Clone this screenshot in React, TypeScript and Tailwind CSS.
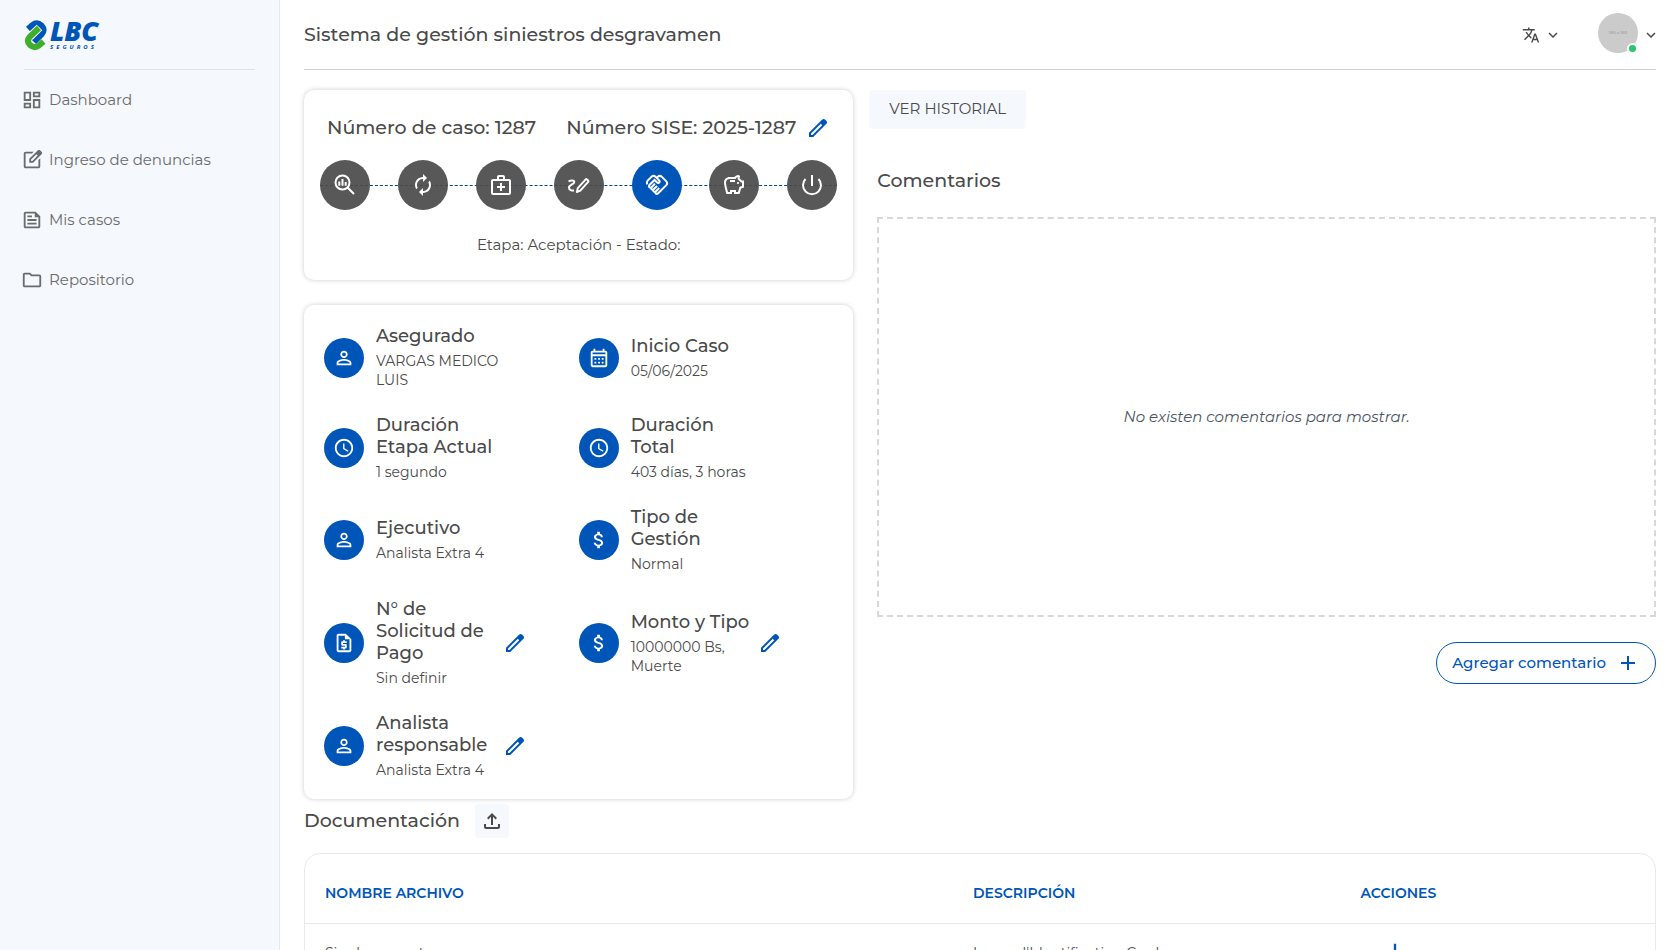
import type { ReactNode } from "react";
import {
  MdAccessTime,
  MdAdd,
  MdAttachMoney,
  MdAutorenew,
  MdKeyboardArrowDown,
  MdOutlineCalendarMonth,
  MdOutlineDashboard,
  MdOutlineFeed,
  MdOutlineFileDownload,
  MdOutlineFileUpload,
  MdOutlineFolder,
  MdOutlineHandshake,
  MdOutlineMedicalServices,
  MdOutlineRequestQuote,
  MdOutlineSavings,
  MdPersonOutline,
  MdTranslate,
} from "react-icons/md";

const NAV_ITEMS = [
  { label: "Dashboard", icon: <MdOutlineDashboard size={22} /> },
  { label: "Ingreso de denuncias", icon: <EditSquareIcon /> },
  { label: "Mis casos", icon: <MdOutlineFeed size={22} /> },
  { label: "Repositorio", icon: <MdOutlineFolder size={22} /> },
];

const STEPS = [
  { name: "Análisis", icon: <SearchStatsIcon /> },
  { name: "Proceso", icon: <MdAutorenew size={24} /> },
  { name: "Revisión médica", icon: <MdOutlineMedicalServices size={24} /> },
  { name: "Firma", icon: <SignIcon /> },
  { name: "Aceptación", icon: <MdOutlineHandshake size={24} />, active: true },
  { name: "Pago", icon: <MdOutlineSavings size={24} /> },
  { name: "Cierre", icon: <PowerIcon /> },
];

type Detail = {
  title: string;
  value: string;
  icon: ReactNode;
  editable?: boolean;
};

const DETAILS: Detail[] = [
  {
    title: "Asegurado",
    value: "VARGAS MEDICO LUIS",
    icon: <MdPersonOutline size={22} />,
  },
  {
    title: "Inicio Caso",
    value: "05/06/2025",
    icon: <MdOutlineCalendarMonth size={22} />,
  },
  {
    title: "Duración\nEtapa Actual",
    value: "1 segundo",
    icon: <MdAccessTime size={22} />,
  },
  {
    title: "Duración\nTotal",
    value: "403 días, 3 horas",
    icon: <MdAccessTime size={22} />,
  },
  {
    title: "Ejecutivo",
    value: "Analista Extra 4",
    icon: <MdPersonOutline size={22} />,
  },
  {
    title: "Tipo de\nGestión",
    value: "Normal",
    icon: <MdAttachMoney size={22} />,
  },
  {
    title: "N° de\nSolicitud de\nPago",
    value: "Sin definir",
    icon: <MdOutlineRequestQuote size={22} />,
    editable: true,
  },
  {
    title: "Monto y Tipo",
    value: "10000000 Bs,\nMuerte",
    icon: <MdAttachMoney size={22} />,
    editable: true,
  },
  {
    title: "Analista\nresponsable",
    value: "Analista Extra 4",
    icon: <MdPersonOutline size={22} />,
    editable: true,
  },
];

const DOCUMENTS = [
  { name: "Sin documento", description: "Insured'Identification Card" },
];

export default function App() {
  return (
    <div className="flex h-screen overflow-hidden bg-white font-['Montserrat','Inter',sans-serif] text-[#4a4a4a]">
      <Sidebar />
      <div className="flex-1 min-w-0 px-6">
        <Header />
        <main className="pt-5">
          <div className="grid grid-cols-12 gap-x-6">
            <div className="col-span-5 flex flex-col gap-[25px]">
              <CaseCard />
              <DetailsCard />
            </div>
            <Comments />
          </div>
          <Documents />
        </main>
      </div>
    </div>
  );
}

function Sidebar() {
  return (
    <aside className="w-[280px] shrink-0 border-r border-[#e4e8ed] bg-[#f5f8fd] px-6">
      <div className="flex h-[70px] items-center border-b border-[#dfe3e8]">
        <Logo />
      </div>
      <nav className="flex flex-col text-[15px] text-[#6b6b6b]">
        {NAV_ITEMS.map(({ label, icon }) => (
          <a
            key={label}
            href="#"
            className="-ml-[3px] flex h-[60px] items-center gap-1.5"
          >
            {icon}
            {label}
          </a>
        ))}
      </nav>
    </aside>
  );
}

function Header() {
  return (
    <header className="flex h-[70px] items-center justify-between border-b border-[#d0d0d0]">
      <h1 className="text-[19px]/7 font-medium">
        Sistema de gestión siniestros desgravamen
      </h1>
      <div className="flex items-center gap-9">
        <button className="flex items-center gap-1" aria-label="Idioma">
          <MdTranslate size={18} />
          <MdKeyboardArrowDown size={18} />
        </button>
        <button className="-mr-1 flex items-center gap-1" aria-label="Cuenta">
          <span className="relative mb-1 grid size-10 place-items-center rounded-full bg-[#cbcbcb]">
            <span className="text-[4px] font-bold text-[#aaaaaa]">
              160 x 160
            </span>
            <span className="absolute right-0 -bottom-px size-[11px] rounded-full border-2 border-white bg-[#28c76f]" />
          </span>
          <MdKeyboardArrowDown size={18} />
        </button>
      </div>
    </header>
  );
}

function CaseCard() {
  return (
    <section className="rounded-[10px] bg-white px-4 py-6 shadow-[0_0_5px_rgba(0,0,0,0.2)]">
      <div className="flex items-center justify-between px-[7px] text-[19px]/7 font-medium">
        <h2>Número de caso: 1287</h2>
        <div className="flex items-center gap-2.5">
          <h2>Número SISE: 2025-1287</h2>
          <EditButton label="Editar número SISE" />
        </div>
      </div>
      <ol className="relative mt-[18px] flex justify-between">
        <li
          aria-hidden
          className="absolute inset-x-0 top-[25px] border-t border-dashed border-[#004a80]"
        />
        {STEPS.map(({ name, icon, active }) => (
          <li
            key={name}
            aria-label={name}
            className={
              active
                ? "relative grid size-[50px] place-items-center rounded-full bg-[#0055b8] text-white"
                : "relative grid size-[50px] place-items-center rounded-full bg-[#4a4a4a]/92 text-white"
            }
          >
            {icon}
          </li>
        ))}
      </ol>
      <p className="mt-6 text-center text-[15px]/[22px]">
        Etapa: Aceptación - Estado:
      </p>
    </section>
  );
}

function DetailsCard() {
  return (
    <section className="grid grid-cols-2 gap-y-6 rounded-[10px] bg-white px-5 pt-5 pb-[19px] shadow-[0_0_5px_rgba(0,0,0,0.2)]">
      {DETAILS.map(({ title, value, icon, editable }) => (
        <div key={title} className="flex items-center">
          <span className="grid size-10 shrink-0 place-items-center rounded-full bg-[#0055b8] text-white">
            {icon}
          </span>
          <div className="ml-3 w-[127px]">
            <h3 className="text-lg/[22px] font-medium whitespace-pre-line">
              {title}
            </h3>
            <p className="mt-[5px] text-sm/[19px] whitespace-pre-line">
              {value}
            </p>
          </div>
          {editable && <EditButton label={`Editar ${title}`} />}
        </div>
      ))}
    </section>
  );
}

function Comments() {
  return (
    <section className="col-span-7">
      <button className="-ml-2 h-[39px] rounded bg-[#f5f8fd] px-5 text-[15px]">
        VER HISTORIAL
      </button>
      <h2 className="mt-9 text-[19px]/8 font-medium">Comentarios</h2>
      <div className="mt-5 grid h-[400px] place-items-center border-2 border-dashed border-[#d8d8d8]">
        <p className="text-[15px] text-[#4b5563] italic">
          No existen comentarios para mostrar.
        </p>
      </div>
      <div className="mt-[25px] flex justify-end">
        <button className="flex h-[42px] items-center gap-2.5 rounded-full border border-[#0055b8] px-[15px] text-[15px] font-medium text-[#0055b8]">
          Agregar comentario
          <MdAdd size={24} />
        </button>
      </div>
    </section>
  );
}

function Documents() {
  return (
    <section>
      <div className="flex items-center gap-[15px] pt-[5px]">
        <h2 className="text-[19px]/7 font-medium">Documentación</h2>
        <button
          className="grid size-[34px] place-items-center rounded bg-[#f5f8fd]"
          aria-label="Subir documento"
        >
          <MdOutlineFileUpload size={24} />
        </button>
      </div>
      <div className="mt-[15px] rounded-2xl border border-[#e9e9e9]">
        <table className="w-full table-fixed text-left text-sm">
          <thead>
            <tr className="h-[69px] border-b border-[#e9e9e9] text-[#0055b8]">
              <th className="w-[48%] pt-2.5 pl-5 font-semibold">
                NOMBRE ARCHIVO
              </th>
              <th className="w-[29%] pt-2.5 pl-5 font-semibold">
                DESCRIPCIÓN
              </th>
              <th className="pt-2.5 pl-4 font-semibold">ACCIONES</th>
            </tr>
          </thead>
          <tbody>
            {DOCUMENTS.map(({ name, description }) => (
              <tr key={name} className="h-[60px]">
                <td className="pl-5">{name}</td>
                <td className="pl-5">{description}</td>
                <td className="pl-9">
                  <button
                    className="block text-[#0055b8]"
                    aria-label="Descargar"
                  >
                    <MdOutlineFileDownload size={28} />
                  </button>
                </td>
              </tr>
            ))}
          </tbody>
        </table>
      </div>
    </section>
  );
}

function EditButton({ label }: { label: string }) {
  return (
    <button className="text-[#0055b8]" aria-label={label}>
      <svg width="24" height="24" viewBox="0 0 24 24" fill="currentColor">
        <path d="M5 19h1.425L16.200 9.225 14.775 7.800 5 17.575V19Zm-2 2v-4.250L16.200 3.575q.300-.275.663-.425.362-.150.762-.150t.775.150q.375.150.650.450L20.425 5q.300.275.438.650.137.375.137.750 0 .400-.137.763-.138.362-.438.662L7.250 21H3Z" />
      </svg>
    </button>
  );
}

function Logo() {
  return (
    <svg
      width="74"
      height="32"
      viewBox="0 0 74 32"
      className="ml-px overflow-visible"
      aria-label="LBC Seguros"
    >
      {/* interlocked S mark */}
      <g fill="none" strokeWidth="6">
        <path
          stroke="#0055b8"
          d="M3 10L7.500 6Q12 2.500 16.500 6.500Q20.500 11 16.500 15.500L9 23"
        />
        <path stroke="#f5f8fd" strokeWidth="8" d="M14.500 8.500L4.800 18" />
        <path
          stroke="#3fae2a"
          d="M14 9L5 17.500Q1 22 5 26Q9.500 30 14 26.500L18.500 22.500"
        />
      </g>
      <text
        x="25"
        y="22"
        fill="#0055b8"
        fontFamily="Open Sans, sans-serif"
        fontSize="27"
        fontStyle="italic"
        fontWeight="800"
      >
        LBC
      </text>
      <text
        x="25"
        y="30"
        fill="#0055b8"
        fontFamily="Open Sans, sans-serif"
        fontSize="6"
        fontStyle="italic"
        fontWeight="700"
        letterSpacing="3"
      >
        SEGUROS
      </text>
    </svg>
  );
}

function EditSquareIcon() {
  return (
    <svg width="22" height="22" viewBox="0 0 24 24" fill="currentColor">
      <path d="M5 21c-.55 0-1.020-.196-1.410-.590A1.930 1.930 0 0 1 3 19V5c0-.55.196-1.020.590-1.410C3.980 3.200 4.450 3 5 3h8.930l-2 2H5v14h14v-6.950l2-2V19c0 .55-.196 1.020-.590 1.410-.390.390-.860.590-1.410.590H5Zm4-6v-4.250l9.180-9.180c.2-.2.430-.350.680-.450a2.020 2.020 0 0 1 1.510 0c.240.090.470.240.680.450l1.400 1.420c.180.200.330.430.430.670a1.920 1.920 0 0 1-.01 1.490c-.100.240-.240.470-.420.670L13.250 15H9Zm2-2h1.400l5.800-5.800-.700-.700-.730-.700L11 11.580V13Z" />
    </svg>
  );
}

function SearchStatsIcon() {
  return (
    <svg
      width="24"
      height="24"
      viewBox="0 0 24 24"
      fill="none"
      stroke="currentColor"
      strokeWidth="2"
    >
      <circle cx="9.500" cy="9.500" r="7" />
      <path d="M14.500 14.500L21 21M6.300 8.500v4.200M9.500 6v6.700M12.700 9v3.700" />
    </svg>
  );
}

function SignIcon() {
  return (
    <svg
      width="24"
      height="24"
      viewBox="0 0 24 24"
      fill="none"
      stroke="currentColor"
      strokeWidth="2"
      strokeLinejoin="round"
    >
      <path d="M1.500 8.300C4 7 7.300 7 7.300 9C7.300 11.300 2 11.800 2 14.800C2 17 4.500 17.800 7 17.500" />
      <path d="M10.800 15.200L18.700 6.400Q19.300 5.800 19.900 6.400L21.200 7.600Q21.800 8.200 21.200 8.800L13.300 17.600L9.800 19Z" />
    </svg>
  );
}

function PowerIcon() {
  return (
    <svg
      width="24"
      height="24"
      viewBox="0 0 24 24"
      fill="none"
      stroke="currentColor"
      strokeWidth="2"
    >
      <path d="M12 2v11M5.500 6a9 9 0 1 0 13 0" />
    </svg>
  );
}
